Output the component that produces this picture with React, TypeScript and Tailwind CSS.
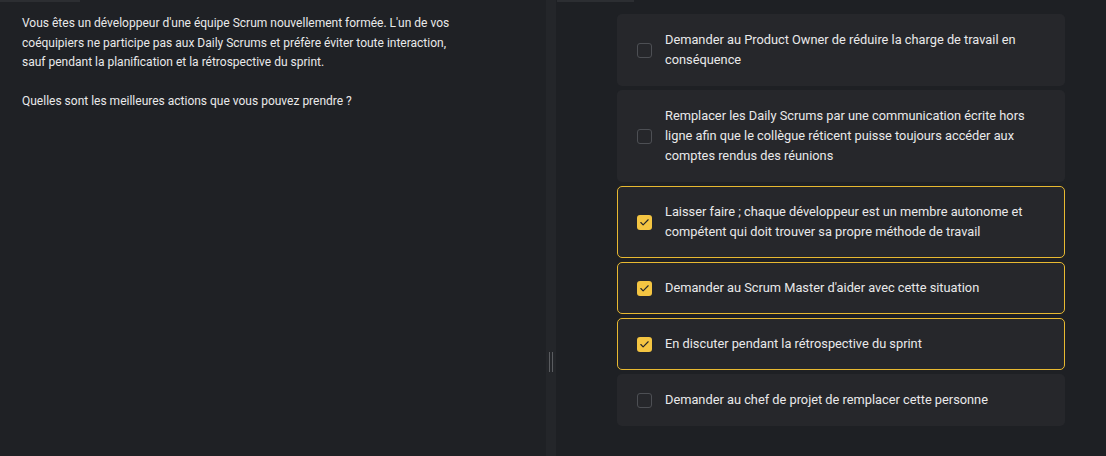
import { Check } from 'lucide-react';

type Option = { id: number; text: string; checked: boolean };

const options: Option[] = [
  { id: 1, text: 'Demander au Product Owner de réduire la charge de travail en conséquence', checked: false },
  {
    id: 2,
    text: 'Remplacer les Daily Scrums par une communication écrite hors ligne afin que le collègue réticent puisse toujours accéder aux comptes rendus des réunions',
    checked: false,
  },
  {
    id: 3,
    text: 'Laisser faire ; chaque développeur est un membre autonome et compétent qui doit trouver sa propre méthode de travail',
    checked: true,
  },
  { id: 4, text: "Demander au Scrum Master d'aider avec cette situation", checked: true },
  { id: 5, text: 'En discuter pendant la rétrospective du sprint', checked: true },
  { id: 6, text: 'Demander au chef de projet de remplacer cette personne', checked: false },
];

function OptionCard({ option }: { option: Option }) {
  return (
    <div
      className={`flex items-center gap-[13px] rounded-[5px] border bg-[#26272b] pl-[19px] pr-[19px] py-[15px] ${
        option.checked ? 'border-[#e8b931]' : 'border-transparent'
      }`}
    >
      {option.checked ? (
        <span className="flex h-[15px] w-[15px] shrink-0 items-center justify-center rounded-[3px] bg-[#f4c542]">
          <Check size={11} strokeWidth={2.5} className="text-[#26272b]" />
        </span>
      ) : (
        <span className="h-[15px] w-[15px] shrink-0 rounded-[3px] border-[1.5px] border-[#4d4f54]" />
      )}
      <span className="text-[12.8px] leading-5 text-[#e9e9ea]">{option.text}</span>
    </div>
  );
}

export default function App() {
  return (
    <div
      className="flex h-[456px] w-[1106px] overflow-hidden bg-[#1e2024]"
      style={{ fontFamily: 'Roboto, "Noto Sans", sans-serif' }}
    >
      <div className="relative w-[546px] shrink-0 bg-[#1f2125]">
        <div className="absolute left-0 top-0 h-[2px] w-[80px] bg-[#2c2e32]" />
        <p className="max-w-[462px] pl-[22px] pt-[14px] text-[12px] leading-[19.5px] text-[#e9e9ea]">
          Vous êtes un développeur d'une équipe Scrum nouvellement formée. L'un de vos coéquipiers ne participe pas aux
          Daily Scrums et préfère éviter toute interaction, sauf pendant la planification et la rétrospective du sprint.
          <br />
          <br />
          Quelles sont les meilleures actions que vous pouvez prendre ?
        </p>
      </div>

      <div className="flex w-[10px] shrink-0 items-center justify-center bg-[#24262a] pt-[268px]">
        <div className="flex gap-[2px]">
          <span className="h-[20px] w-[1px] bg-[#5a5c60]" />
          <span className="h-[20px] w-[1px] bg-[#5a5c60]" />
        </div>
      </div>

      <div className="relative flex-1 pl-[61px] pt-[14px]">
        <div className="absolute left-[1px] top-0 h-[2px] w-[77px] bg-[#2c2e32]" />
        <div className="flex w-[448px] flex-col gap-1">
          {options.map((o) => (
            <OptionCard key={o.id} option={o} />
          ))}
        </div>
      </div>
    </div>
  );
}
